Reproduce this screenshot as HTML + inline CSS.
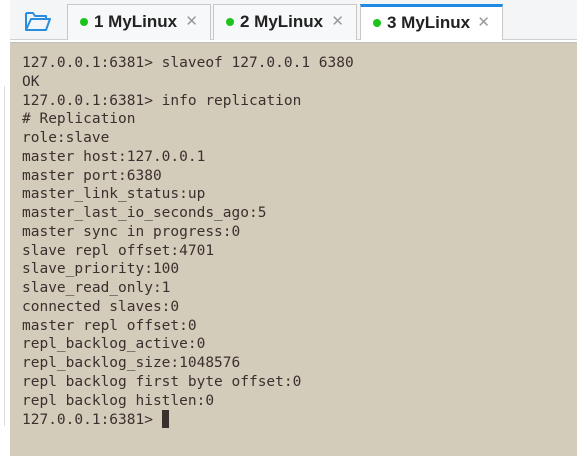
<html><head><style>
body{margin:0;width:577px;height:455px;overflow:hidden;background:#fff;position:relative;font-family:"Liberation Sans",sans-serif}
.bar{position:absolute;left:10px;top:0;width:567px;height:40px;background:#f4f5f6;border-bottom:1px solid #d0d0d0;box-sizing:border-box}
.tab{position:absolute;top:4px;height:36px;background:#f7f8f9;border:1px solid #c8c8c8;border-bottom:none;box-sizing:border-box;font-weight:bold;font-size:17px;color:#222;line-height:34px}
.tab .d{display:inline-block;width:8px;height:8px;border-radius:50%;background:#1bc41b;margin:0 6px 1px 12px}
.tab .x{position:absolute;right:12px;top:0;color:#999;font-weight:normal;font-size:15px}
.term{position:absolute;left:10px;top:42px;width:567px;height:413px;background:#d4ccba;border-top:1px solid #c0c0c0}
pre{margin:0;position:absolute;left:12px;top:11px;font-family:"DejaVu Sans Mono",monospace;font-size:14.5px;line-height:18.75px;color:#3a302e}
.cur{display:inline-block;width:7px;height:18px;background:#3a302e;vertical-align:-4px}
</style></head><body>
<div style="position:absolute;left:0;top:86px;width:4px;height:340px;border-right:1px solid #ddd"></div>
<div class="bar"></div>
<svg style="position:absolute;left:24px;top:10px" width="28" height="23" viewBox="0 0 28 23"><path d="M2 3h7l2 3h11v3M2 3v17h20l4-11H7L2 20" fill="none" stroke="#2a8ee0" stroke-width="2" stroke-linejoin="round"/></svg>
<div class="tab" style="left:67px;width:144px"><span class="d"></span>1 MyLinux<span class="x">✕</span></div>
<div class="tab" style="left:213px;width:144px"><span class="d"></span>2 MyLinux<span class="x">✕</span></div>
<div class="tab" style="left:360px;width:143px;background:#fff;border-top:3px solid #1e88e5;line-height:31px"><span class="d"></span>3 MyLinux<span class="x">✕</span></div>
<div class="term"><pre>127.0.0.1:6381&gt; slaveof 127.0.0.1 6380
OK
127.0.0.1:6381&gt; info replication
# Replication
role:slave
master host:127.0.0.1
master port:6380
master_link_status:up
master_last_io_seconds_ago:5
master sync in progress:0
slave repl offset:4701
slave_priority:100
slave_read_only:1
connected slaves:0
master repl offset:0
repl_backlog_active:0
repl_backlog_size:1048576
repl backlog first byte offset:0
repl backlog histlen:0
127.0.0.1:6381&gt; <span class="cur"></span></pre></div>
</body></html>
